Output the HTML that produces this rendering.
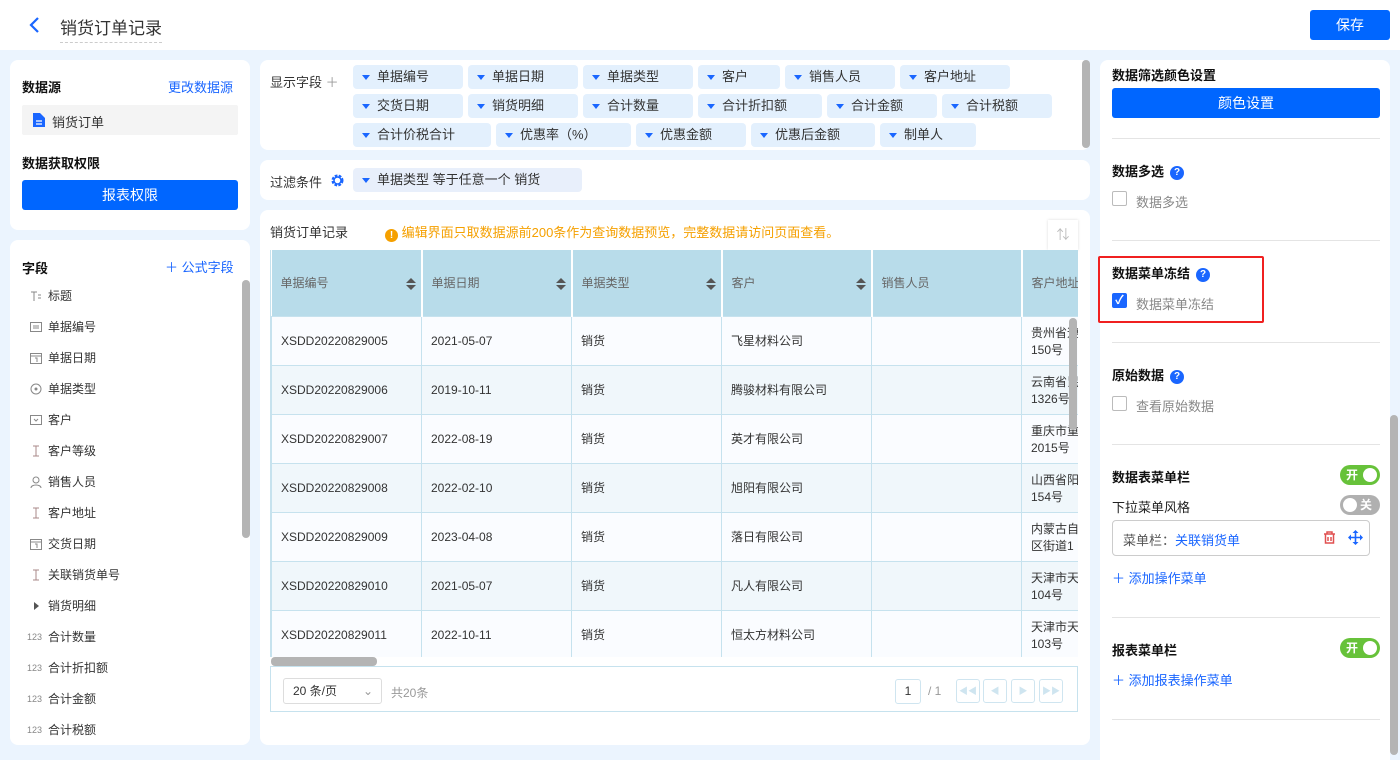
<!DOCTYPE html>
<html><head><meta charset="utf-8"><style>
*{box-sizing:border-box;margin:0;padding:0}
body{width:1400px;height:755px;overflow:hidden;background:#ebf4fe;font-family:"Liberation Sans","Noto Sans CJK SC",sans-serif;font-size:13px;color:#333;position:relative}
.a{position:absolute}
.panel{position:absolute;background:#fff;border-radius:8px}
.tag{position:absolute;height:24px;background:#e3f0fd;border-radius:4px;font-size:13px;color:#333;line-height:24px;padding-left:24px;white-space:nowrap}
.tag:before{content:"";position:absolute;left:9px;top:10px;border-left:4px solid transparent;border-right:4px solid transparent;border-top:5px solid #1a66ff}
.h{font-weight:bold;color:#111;font-size:13px}
.blue{color:#1a66ff}
.btn{position:absolute;background:#0066ff;color:#fff;border-radius:3px;text-align:center;font-size:14px}
.fi{position:absolute;left:22px;font-size:12px;color:#333;height:20px;line-height:20px}
.fi svg{position:absolute;left:8px;top:4px}
.fi span{position:absolute;left:26px;white-space:nowrap}
.fi em{position:absolute;left:5px;top:0;font-style:normal;font-size:9px;color:#888}
table{border-collapse:collapse;table-layout:fixed}
td,th{border:1px solid #c6e2ee;font-size:12px;color:#333;text-align:left;padding-left:9px;font-weight:normal;overflow:hidden;white-space:nowrap}
th{background:#b8dcea;color:#666;height:66px;position:relative;border:0;border-right:2px solid #fff}
td{height:49px}
tr.o td{background:#fafcff}tr.e td{background:#f0f7fb}
.sort{position:absolute;right:5px;top:28px;width:10px}
.sort:before{content:"";position:absolute;border-left:5px solid transparent;border-right:5px solid transparent;border-bottom:5px solid #555;top:0}
.sort:after{content:"";position:absolute;border-left:5px solid transparent;border-right:5px solid transparent;border-top:5px solid #555;top:7px}
.sep{position:absolute;left:1112px;width:268px;height:1px;background:#e4e4e4}
.q{display:inline-block;width:14px;height:14px;border-radius:50%;background:#1a66ff;color:#fff;font-size:10px;line-height:14px;text-align:center;font-weight:bold;vertical-align:1px;margin-left:6px}
.cb{position:absolute;width:15px;height:15px;border:1px solid #bbb;border-radius:2px;background:#fff}
.cbl{position:absolute;font-size:13px;color:#888}
.sw{position:absolute;width:40px;height:20px;border-radius:10px;font-size:12px;color:#fff;font-weight:bold;line-height:20px}
.sw b{position:absolute;top:3px;width:14px;height:14px;border-radius:50%;background:#fff}
.pb{position:absolute;top:679px;width:24px;height:24px;border:1px solid #cfe5f0;border-radius:3px;background:#fff;color:#cfe5f0;font-size:9px;text-align:center;line-height:22px}
</style></head><body>
<div class="a" style="left:0;top:0;width:1400px;height:50px;background:#fff"></div>
<svg class="a" style="left:28px;top:17px" width="14" height="16"><path d="M10 1 L3 8 L10 15" stroke="#1a66ff" stroke-width="2.2" fill="none"/></svg>
<div class="a" style="left:60px;top:14px;font-size:17px;color:#333;border-bottom:1px dashed #ccc;padding-bottom:3px">销货订单记录</div>
<div class="btn" style="left:1310px;top:10px;width:80px;height:30px;line-height:30px">保存</div>

<div class="panel" style="left:10px;top:60px;width:240px;height:170px"></div>
<div class="a h" style="left:22px;top:77px">数据源</div>
<div class="a blue" style="left:168px;top:77px">更改数据源</div>
<div class="a" style="left:22px;top:105px;width:216px;height:30px;background:#f4f4f4;border-radius:2px"></div>
<svg class="a" style="left:33px;top:113px" width="12" height="14"><path d="M0 0h7l5 5v9H0z" fill="#1a66ff"/><path d="M3 8h6M3 11h6" stroke="#fff" stroke-width="1.2"/></svg>
<div class="a" style="left:52px;top:112px;color:#333">销货订单</div>
<div class="a h" style="left:22px;top:153px">数据获取权限</div>
<div class="btn" style="left:22px;top:180px;width:216px;height:30px;line-height:30px">报表权限</div>

<div class="panel" style="left:10px;top:240px;width:240px;height:505px"></div>
<div class="a h" style="left:22px;top:258px">字段</div>
<div class="a blue" style="left:165px;top:257px">＋ 公式字段</div>
<div class="a" style="left:242px;top:280px;width:8px;height:258px;background:#b4b4b4;border-radius:4px"></div>
<div class="fi" style="top:286px"><svg width="12" height="12"><path d="M1 2h6M4 2v9M8 5h3M8 8h3" stroke="#888" fill="none"/></svg><span>标题</span></div>
<div class="fi" style="top:317px"><svg width="12" height="12"><rect x="0.5" y="1.5" width="11" height="9" stroke="#888" fill="none"/><path d="M3 5h6M3 7h6" stroke="#888"/></svg><span>单据编号</span></div>
<div class="fi" style="top:348px"><svg width="12" height="12"><rect x="0.5" y="1.5" width="11" height="10" stroke="#888" fill="none"/><path d="M1 4h10M5 6h2v4" stroke="#888" fill="none"/></svg><span>单据日期</span></div>
<div class="fi" style="top:379px"><svg width="12" height="12"><circle cx="6" cy="6" r="5" stroke="#888" fill="none"/><circle cx="6" cy="6" r="1.5" fill="#888"/></svg><span>单据类型</span></div>
<div class="fi" style="top:410px"><svg width="12" height="12"><rect x="0.5" y="1.5" width="11" height="9" stroke="#888" fill="none"/><path d="M4 5l2 2 2-2" stroke="#888" fill="none"/></svg><span>客户</span></div>
<div class="fi" style="top:441px"><svg width="12" height="12"><path d="M3 1h6M6 1v10M3 11h6" stroke="#a88" fill="none"/></svg><span>客户等级</span></div>
<div class="fi" style="top:472px"><svg width="12" height="12"><circle cx="6" cy="4" r="3" stroke="#888" fill="none"/><path d="M1 12c0-4 10-4 10 0" stroke="#888" fill="none"/></svg><span>销售人员</span></div>
<div class="fi" style="top:503px"><svg width="12" height="12"><path d="M3 1h6M6 1v10M3 11h6" stroke="#a88" fill="none"/></svg><span>客户地址</span></div>
<div class="fi" style="top:534px"><svg width="12" height="12"><rect x="0.5" y="1.5" width="11" height="10" stroke="#888" fill="none"/><path d="M1 4h10M5 6h2v4" stroke="#888" fill="none"/></svg><span>交货日期</span></div>
<div class="fi" style="top:565px"><svg width="12" height="12"><path d="M3 1h6M6 1v10M3 11h6" stroke="#a88" fill="none"/></svg><span>关联销货单号</span></div>
<div class="fi" style="top:596px"><svg width="12" height="12"><path d="M4 2l5 4-5 4z" fill="#555"/></svg><span>销货明细</span></div>
<div class="fi" style="top:627px"><em>123</em><span>合计数量</span></div>
<div class="fi" style="top:658px"><em>123</em><span>合计折扣额</span></div>
<div class="fi" style="top:689px"><em>123</em><span>合计金额</span></div>
<div class="fi" style="top:720px"><em>123</em><span>合计税额</span></div>

<div class="panel" style="left:260px;top:60px;width:830px;height:90px"></div>
<div class="a" style="left:270px;top:72px">显示字段 <span style="color:#999">＋</span></div>
<div class="a" style="left:1082px;top:60px;width:8px;height:88px;background:#b4b4b4;border-radius:4px"></div>
<div class="tag" style="left:353px;top:65px;width:110px">单据编号</div>
<div class="tag" style="left:468px;top:65px;width:110px">单据日期</div>
<div class="tag" style="left:583px;top:65px;width:110px">单据类型</div>
<div class="tag" style="left:698px;top:65px;width:82px">客户</div>
<div class="tag" style="left:785px;top:65px;width:110px">销售人员</div>
<div class="tag" style="left:900px;top:65px;width:110px">客户地址</div>
<div class="tag" style="left:353px;top:94px;width:110px">交货日期</div>
<div class="tag" style="left:468px;top:94px;width:110px">销货明细</div>
<div class="tag" style="left:583px;top:94px;width:110px">合计数量</div>
<div class="tag" style="left:698px;top:94px;width:124px">合计折扣额</div>
<div class="tag" style="left:827px;top:94px;width:110px">合计金额</div>
<div class="tag" style="left:942px;top:94px;width:110px">合计税额</div>
<div class="tag" style="left:353px;top:123px;width:138px">合计价税合计</div>
<div class="tag" style="left:496px;top:123px;width:135px">优惠率（%）</div>
<div class="tag" style="left:636px;top:123px;width:110px">优惠金额</div>
<div class="tag" style="left:751px;top:123px;width:124px">优惠后金额</div>
<div class="tag" style="left:880px;top:123px;width:96px">制单人</div>

<div class="panel" style="left:260px;top:160px;width:830px;height:40px"></div>
<div class="a" style="left:270px;top:172px">过滤条件</div>
<svg class="a" style="left:331px;top:174px" width="13" height="13"><circle cx="6.5" cy="6.5" r="4.5" stroke="#1a66ff" stroke-width="3" fill="none" stroke-dasharray="2.5 1.2"/><circle cx="6.5" cy="6.5" r="3.5" stroke="#1a66ff" stroke-width="1.5" fill="none"/></svg>
<div class="tag" style="left:353px;top:168px;width:229px;background:#e8effb">单据类型 等于任意一个 销货</div>

<div class="panel" style="left:260px;top:210px;width:830px;height:535px"></div>
<div class="a" style="left:270px;top:222px">销货订单记录</div>
<div class="a" style="left:385px;top:222px;color:#f5a000"><span style="display:inline-block;width:13px;height:13px;border-radius:50%;background:#f5a000;color:#fff;font-size:10px;text-align:center;line-height:13px;font-weight:bold;vertical-align:-1px">!</span> 编辑界面只取数据源前200条作为查询数据预览，完整数据请访问页面查看。</div>
<div class="a" style="left:1048px;top:220px;width:30px;height:30px;background:#fff;box-shadow:0 0 3px #ddd;color:#bbb;text-align:center;line-height:30px;font-size:13px">⇅</div>
<div class="a" style="left:270px;top:250px;width:808px;height:407px;overflow:hidden;border-left:1px solid #c6e2ee">
<table style="width:900px">
<colgroup><col style="width:150px"><col style="width:150px"><col style="width:150px"><col style="width:150px"><col style="width:150px"><col style="width:150px"></colgroup>
<tr><th>单据编号<span class="sort"></span></th><th>单据日期<span class="sort"></span></th><th>单据类型<span class="sort"></span></th><th>客户<span class="sort"></span></th><th>销售人员</th><th>客户地址</th></tr>
<tr class="o"><td>XSDD20220829005</td><td>2021-05-07</td><td>销货</td><td>飞星材料公司</td><td></td><td>贵州省遵<br>150号</td></tr>
<tr class="e"><td>XSDD20220829006</td><td>2019-10-11</td><td>销货</td><td>腾骏材料有限公司</td><td></td><td>云南省昆<br>1326号</td></tr>
<tr class="o"><td>XSDD20220829007</td><td>2022-08-19</td><td>销货</td><td>英才有限公司</td><td></td><td>重庆市重<br>2015号</td></tr>
<tr class="e"><td>XSDD20220829008</td><td>2022-02-10</td><td>销货</td><td>旭阳有限公司</td><td></td><td>山西省阳<br>154号</td></tr>
<tr class="o"><td>XSDD20220829009</td><td>2023-04-08</td><td>销货</td><td>落日有限公司</td><td></td><td>内蒙古自<br>区街道1</td></tr>
<tr class="e"><td>XSDD20220829010</td><td>2021-05-07</td><td>销货</td><td>凡人有限公司</td><td></td><td>天津市天<br>104号</td></tr>
<tr class="o"><td>XSDD20220829011</td><td>2022-10-11</td><td>销货</td><td>恒太方材料公司</td><td></td><td>天津市天<br>103号</td></tr>
</table></div>
<div class="a" style="left:1069px;top:318px;width:8px;height:112px;background:#b4b4b4;border-radius:4px"></div>
<div class="a" style="left:271px;top:657px;width:106px;height:9px;background:#b4b4b4;border-radius:4px"></div>
<div class="a" style="left:270px;top:666px;width:808px;height:46px;border:1px solid #c6e2ee;background:#fff"></div>
<div class="a" style="left:283px;top:678px;width:99px;height:26px;border:1px solid #ddd;border-radius:3px;font-size:12px;line-height:24px;padding-left:9px">20 条/页<span style="position:absolute;right:8px;color:#999">⌄</span></div>
<div class="a" style="left:391px;top:684px;font-size:12px;color:#999">共20条</div>
<div class="a" style="left:895px;top:679px;width:26px;height:25px;border:1px solid #cfe5f0;border-radius:3px;font-size:12px;text-align:center;line-height:23px">1</div>
<div class="a" style="left:928px;top:684px;font-size:12px;color:#999">/ 1</div>
<div class="pb" style="left:956px">◀◀</div><div class="pb" style="left:983px">◀</div><div class="pb" style="left:1011px">▶</div><div class="pb" style="left:1039px">▶▶</div>

<div class="panel" style="left:1100px;top:60px;width:290px;height:700px;border-radius:8px 8px 0 0"></div>
<div class="a" style="left:1390px;top:415px;width:8px;height:340px;background:#b4b4b4;border-radius:4px"></div>
<div class="a h" style="left:1112px;top:65px">数据筛选颜色设置</div>
<div class="btn" style="left:1112px;top:88px;width:268px;height:30px;line-height:30px">颜色设置</div>
<div class="sep" style="top:138px"></div>
<div class="a h" style="left:1112px;top:161px">数据多选<span class="q">?</span></div>
<div class="cb" style="left:1112px;top:191px"></div><div class="cbl" style="left:1136px;top:192px">数据多选</div>
<div class="sep" style="top:240px"></div>
<div class="a" style="left:1098px;top:256px;width:166px;height:67px;border:2px solid #f02020;border-radius:2px"></div>
<div class="a h" style="left:1112px;top:263px">数据菜单冻结<span class="q">?</span></div>
<div class="cb" style="left:1112px;top:293px;background:#1a66ff;border-color:#1a66ff;color:#fff;font-size:12px;line-height:13px;text-align:center;font-weight:bold">✓</div><div class="cbl" style="left:1136px;top:294px">数据菜单冻结</div>
<div class="sep" style="top:342px"></div>
<div class="a h" style="left:1112px;top:365px">原始数据<span class="q">?</span></div>
<div class="cb" style="left:1112px;top:396px"></div><div class="cbl" style="left:1136px;top:396px">查看原始数据</div>
<div class="sep" style="top:444px"></div>
<div class="a h" style="left:1112px;top:467px">数据表菜单栏</div>
<div class="sw" style="left:1340px;top:465px;background:#67c23a;padding-left:6px">开<b style="right:3px"></b></div>
<div class="a" style="left:1112px;top:497px;color:#222">下拉菜单风格</div>
<div class="sw" style="left:1340px;top:495px;background:#b0b0b0;padding-left:20px">关<b style="left:3px"></b></div>
<div class="a" style="left:1112px;top:520px;width:258px;height:36px;border:1px solid #ccc;border-radius:4px"></div>
<div class="a" style="left:1123px;top:530px;color:#555">菜单栏：<span class="blue">关联销货单</span></div>
<svg class="a" style="left:1323px;top:531px" width="13" height="13"><path d="M1 3h11M4 3V1h5v2M2.5 3.5v8.5h8V3.5M5 6v4M8 6v4" stroke="#e05050" stroke-width="1.5" fill="none"/></svg>
<svg class="a" style="left:1348px;top:530px" width="15" height="15"><path d="M7.5 1v13M1 7.5h13" stroke="#1a66ff" stroke-width="1.6"/><path d="M7.5 0l3 3h-6zM7.5 15l3-3h-6zM0 7.5l3-3v6zM15 7.5l-3-3v6z" fill="#1a66ff"/></svg>
<div class="a blue" style="left:1112px;top:568px">＋ 添加操作菜单</div>
<div class="sep" style="top:617px"></div>
<div class="a h" style="left:1112px;top:640px">报表菜单栏</div>
<div class="sw" style="left:1340px;top:638px;background:#67c23a;padding-left:6px">开<b style="right:3px"></b></div>
<div class="a blue" style="left:1112px;top:670px">＋ 添加报表操作菜单</div>
<div class="sep" style="top:719px"></div>
</body></html>
